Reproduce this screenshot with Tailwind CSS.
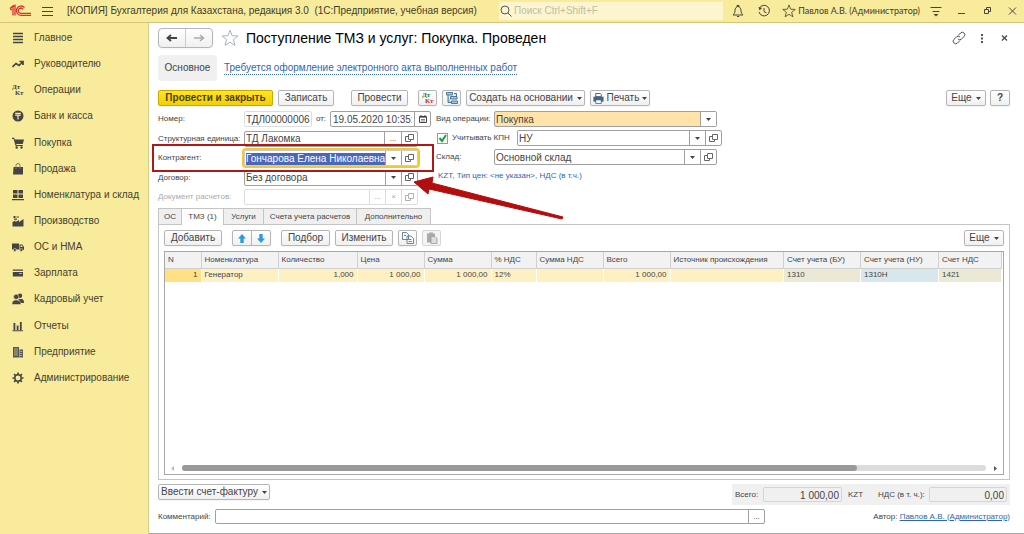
<!DOCTYPE html>
<html lang="ru">
<head>
<meta charset="utf-8">
<meta name="viewport" content="width=device-width, initial-scale=1">
<title>Поступление ТМЗ и услуг</title>
<script src="https://cdn.jsdelivr.net/npm/@tailwindcss/browser@4"></script>
</head>
<body class="min-h-screen flex flex-col bg-white font-['Liberation_Sans',Arial,sans-serif] text-[10px] leading-3 text-[#444]">

<svg class="hidden" aria-hidden="true">
  <symbol id="open" viewBox="0 0 9 9"><path d="M3.5.5h5v5h-5zM3.5 2.500h-3v5h5v-2" fill="none" stroke="#666"/></symbol>
  <symbol id="down" viewBox="0 0 5 3"><path d="M0 0h5L2.500 3z" fill="#444"/></symbol>
  <symbol id="star" viewBox="0 0 18 18"><path d="M9 1.200l2.100 5.500 5.900.3-4.600 3.700 1.600 5.700L9 13.200l-5 3.200 1.600-5.700L1 7l5.900-.3z" fill="none" stroke="currentColor" stroke-linejoin="round"/></symbol>
</svg>

<header class="flex h-[23px] shrink-0 items-center border-b border-[#d3c57c] bg-[#f9eb9c] pr-1 text-[#3f3b28]">
  <svg class="ml-2 h-4 w-6" viewBox="0 0 24 16" aria-label="1C" fill="none" stroke="#d5322d"><path d="M2 5.500L5 3v9.500M2.200 6.500H4M7 12.500V2.500L4.500 4" stroke-width="1.300"/><path d="M16.500 4.500A4.700 4.700 0 1 0 13 12.400h10M15 6.300A2.600 2.600 0 1 0 13 10.300h10" stroke-width="1.300"/></svg>
  <button class="ml-2 h-4 w-4" aria-label="Меню"><svg class="h-4 w-4" viewBox="0 0 16 16"><path d="M2 4.500h11M2 8.500h11M2 12.500h11" stroke="#444"/></svg></button>
  <h1 class="ml-[11px] whitespace-pre">[КОПИЯ] Бухгалтерия для Казахстана, редакция 3.0  (1С:Предприятие, учебная версия)</h1>
  <div class="ml-auto flex items-center">
    <label class="flex h-[18px] w-[224px] items-center bg-[#fdf5cf]">
      <svg class="ml-px h-3 w-3" viewBox="0 0 12 12" fill="none" stroke="#555"><circle cx="5" cy="5" r="4"/><path d="M8 8l3.500 3.500"/></svg>
      <input class="ml-0.5 min-w-0 flex-1 outline-none placeholder:text-[#c2bca0]" placeholder="Поиск Ctrl+Shift+F" aria-label="Поиск">
    </label>
    <button class="ml-[7px] h-4 w-4" aria-label="Уведомления"><svg viewBox="0 0 16 16" class="h-4 w-4" fill="none" stroke="#444"><path d="M3 12c1-1 2-2 2-4.500 0-2.500 1.500-4 3-4s3 1.500 3 4c0 2.500 1 3.500 2 4.500zM7 3.500V2.500h2v1M7 13.500h2.200"/></svg></button>
    <button class="ml-2.5 h-4 w-4" aria-label="История"><svg viewBox="0 0 16 16" class="h-4 w-4" fill="none" stroke="#444"><path d="M3.500 5A5.300 5.300 0 1 1 3 9M8 5v3.500l2.500 1.500"/><path d="M2.500 4l1 3.500L6 5z" fill="#444" stroke="none"/></svg></button>
    <button class="ml-2.5 h-3.5 w-3.5" aria-label="Избранное"><svg class="h-3.5 w-3.5"><use href="#star"/></svg></button>
    <button class="w-[124px] whitespace-nowrap text-right font-[Lato,sans-serif] text-[9px]">Павлов А.В. (Администратор)</button>
    <button class="ml-2 h-4 w-4" aria-label="Настройки"><svg viewBox="0 0 16 16" class="h-4 w-4"><path d="M2.500 4.500h11M4.500 8.500h7" stroke="#444"/><path d="M5.500 11h5L8 13.500z" fill="#444"/></svg></button>
    <button class="ml-2.5 h-4 w-4" aria-label="Свернуть"><svg viewBox="0 0 16 16" class="h-4 w-4"><path d="M4 10.500h7" stroke="#444"/></svg></button>
    <button class="ml-2.5 h-4 w-4" aria-label="Развернуть"><svg viewBox="0 0 16 16" class="h-4 w-4" fill="none" stroke="#444"><path d="M4.500 6.500h4v4h-4zM6.500 6V4.500h4v4H9"/></svg></button>
    <button class="ml-2 h-4 w-4" aria-label="Закрыть"><svg viewBox="0 0 16 16" class="h-4 w-4"><path d="M5 4.500l7 7M12 4.500l-7 7" stroke="#444"/></svg></button>
  </div>
</header>

<div class="flex flex-1">
  <nav class="w-[149px] shrink-0 border-r border-[#d9cd8c] bg-[#f9eb9c] pt-[7px]">
    <ul class="flex h-[356px] flex-col justify-between text-[#45412d]">
      <li><a href="#" class="flex h-4 items-center gap-2.5 pl-3"><svg class="h-3 w-3" viewBox="0 0 12 12"><path d="M1 1.500h10M1 4.500h10M1 7.500h10M1 10.500h10" stroke="#444" stroke-width="1.600"/></svg>Главное</a></li>
      <li><a href="#" class="flex h-4 items-center gap-2.5 pl-3"><svg class="h-3 w-3" viewBox="0 0 12 12"><path d="M.5 9l3.500-3.500 3 2L10.500 4M7.500 3.500H11V7" fill="none" stroke="#444" stroke-width="1.700"/></svg>Руководителю</a></li>
      <li><a href="#" class="flex h-4 items-center gap-2.5 pl-3"><svg class="h-3 w-3" viewBox="0 0 12 12" font-family="Liberation Serif,serif" font-size="7" font-weight="bold" fill="#444"><text x="0" y="5">Дт</text><text x="3" y="11">Кт</text></svg>Операции</a></li>
      <li><a href="#" class="flex h-4 items-center gap-2.5 pl-3"><svg class="h-3 w-3" viewBox="0 0 12 12"><circle cx="6" cy="6" r="5.500" fill="#444"/><path d="M3.200 3.300h5.600M3.200 5.200h5.600M6 5v4.500" stroke="#f9eb9c" stroke-width="1.200"/></svg>Банк и касса</a></li>
      <li><a href="#" class="flex h-4 items-center gap-2.5 pl-3"><svg class="h-3 w-3" viewBox="0 0 12 12"><path d="M0 .8h2.200l.6 1.700H12L10.800 7H4.200l.3 1h6.300v1H3.600L1.600 1.900H0z" fill="#444"/><circle cx="4.700" cy="10.500" r="1.200" fill="#444"/><circle cx="9.500" cy="10.500" r="1.200" fill="#444"/></svg>Покупка</a></li>
      <li><a href="#" class="flex h-4 items-center gap-2.5 pl-3"><svg class="h-3 w-3" viewBox="0 0 12 12"><path d="M1.500 4h9.500v7.500H1z" fill="#444"/><path d="M4 6V2.500a2 2 0 0 1 4 0V6" fill="none" stroke="#777" stroke-width="1"/></svg>Продажа</a></li>
      <li><a href="#" class="flex h-4 items-center gap-2.5 pl-3"><svg class="h-3 w-3" viewBox="0 0 12 12"><path d="M1 1h4.500v3.500H1zM6.500 1H11v3.500H6.500zM1 5.500h4.500V9H1zM6.500 5.500H11V9H6.500zM0 10h12v1.300H0z" fill="#444"/></svg>Номенклатура и склад</a></li>
      <li><a href="#" class="flex h-4 items-center gap-2.5 pl-3"><svg class="h-3 w-3" viewBox="0 0 12 12"><path d="M.5 11.500V7l3-1.500V7L7 5v2l4.500-3v7.500zM1.500 1h2v2h-2zM4.500 1.500H7v1H4.500zM2 3.500h3v1.200H2z" fill="#444"/></svg>Производство</a></li>
      <li><a href="#" class="flex h-4 items-center gap-2.5 pl-3"><svg class="h-3 w-3" viewBox="0 0 12 12"><path d="M0 2.500h7v6H0zM7.500 3.500h2.800L12 6v3H7.500z" fill="#444"/><path d="M8.500 4.500H10l.8 1.500H8.500z" fill="#f9eb9c"/><circle cx="2.800" cy="9" r="1.500" fill="#444" stroke="#f9eb9c" stroke-width=".6"/><circle cx="9.300" cy="9" r="1.500" fill="#444" stroke="#f9eb9c" stroke-width=".6"/></svg>ОС и НМА</a></li>
      <li><a href="#" class="flex h-4 items-center gap-2.5 pl-3"><svg class="h-3 w-3" viewBox="0 0 12 12"><path d="M.8 2.500H11v1.200H.8zM.8 5H11v4.500H.8z" fill="#444"/><path d="M7 6.500h3" stroke="#bbb27a"/></svg>Зарплата</a></li>
      <li><a href="#" class="flex h-4 items-center gap-2.5 pl-3"><svg class="h-3 w-3" viewBox="0 0 12 12" fill="#444"><circle cx="8" cy="2.800" r="2.200"/><path d="M6.500 6h3.500c1.500.5 2 2 2 4H8z"/><g stroke="#f9eb9c" stroke-width=".5"><circle cx="4.200" cy="3.800" r="2.600"/><path d="M0 11.500c0-3 1-4.500 4.200-4.500S9 8.500 9 11.500z"/></g></svg>Кадровый учет</a></li>
      <li><a href="#" class="flex h-4 items-center gap-2.5 pl-3"><svg class="h-3 w-3" viewBox="0 0 12 12"><path d="M1.500 3h1.800v7H1.500zM4.700 5.500h1.800V10H4.700zM7.900 2h1.800v8H7.900zM.5 10.300h10.500v.9H.5z" fill="#444"/></svg>Отчеты</a></li>
      <li><a href="#" class="flex h-4 items-center gap-2.5 pl-3"><svg class="h-3 w-3" viewBox="0 0 12 12"><path d="M1 1h6v10.500H1zM7.500 3.500H11v8H7.500z" fill="#555"/><path d="M2 3h4M2 5h4M2 7h4M2 9h4M8.200 5.500h2M8.200 7.500h2M8.200 9.500h2" stroke="#d5c888" stroke-width=".8"/></svg>Предприятие</a></li>
      <li><a href="#" class="flex h-4 items-center gap-2.5 pl-3"><svg class="h-3 w-3" viewBox="0 0 12 12" fill="none" stroke="#444"><circle cx="6" cy="6" r="3.200" stroke-width="1.500"/><path d="M6 .5v2M6 9.500v2M.5 6h2M9.500 6h2M2.100 2.100l1.400 1.400M8.500 8.500l1.400 1.400M9.900 2.100L8.500 3.500M3.500 8.500L2.100 9.900" stroke-width="1.700"/></svg>Администрирование</a></li>
    </ul>
  </nav>

  <main class="flex min-w-0 flex-1 flex-col border-b border-[#aaa] pl-[9px] pr-[14px] pt-[5px]">
    <div class="flex h-5 items-center">
      <div class="flex h-5 w-[55px] rounded-sm border border-[#b5b5b5] bg-linear-to-b from-white to-[#f0f0f0] shadow-xs">
        <button class="flex flex-1 items-center justify-center border-r border-[#ccc]" aria-label="Назад"><svg class="h-2 w-3" viewBox="0 0 12 8"><path d="M11 4H2M5 1L1.500 4 5 7" fill="none" stroke="#444" stroke-width="1.800"/></svg></button>
        <button class="flex flex-1 items-center justify-center" aria-label="Вперед"><svg class="h-2 w-3" viewBox="0 0 12 8"><path d="M1 4h9M7 1l3.500 3L7 7" fill="none" stroke="#aaa" stroke-width="1.500"/></svg></button>
      </div>
      <button class="ml-2 h-[18px] w-[18px] text-[#aab2b8]" aria-label="В избранное"><svg class="h-[18px] w-[18px]"><use href="#star"/></svg></button>
      <h2 class="ml-[7px] text-[14px] leading-4 text-black">Поступление ТМЗ и услуг: Покупка. Проведен</h2>
      <button class="ml-auto h-4 w-4" aria-label="Ссылка"><svg class="h-4 w-4" viewBox="0 0 16 16" fill="none" stroke="#555"><path d="M7 5.500l2.500-2.500a2.500 2.500 0 0 1 3.600 3.600L10.500 9a2.500 2.500 0 0 1-3.500 0M9 10.500L6.500 13a2.500 2.500 0 0 1-3.600-3.600L5.500 7A2.500 2.500 0 0 1 9 7"/></svg></button>
      <button class="ml-2 h-4 w-4" aria-label="Еще"><svg class="h-4 w-4" viewBox="0 0 16 16"><path d="M6 4h2v2H6zM6 7.500h2v2H6zM6 11h2v2H6z" fill="#555"/></svg></button>
      <button class="ml-2 h-3 w-[11px]" aria-label="Закрыть"><svg class="h-3 w-[11px]" viewBox="3 2 11 12"><path d="M6 5.500l5 5M11 5.500l-5 5" stroke="#444" stroke-width="1.200"/></svg></button>
    </div>

    <div class="mt-[7px] flex h-[26px] items-center gap-[7px]">
      <button class="h-[26px] w-[59px] rounded-sm bg-[#f0f0f0]">Основное</button>
      <a href="#" class="border-b border-dotted border-[#3a6ea5] text-[#3465a4]">Требуется оформление электронного акта выполненных работ</a>
    </div>

    <div class="mt-[9px] flex h-4 items-center">
      <button class="h-4 w-[115px] rounded-xs border border-[#c9a800] bg-linear-to-b from-[#ffe51f] to-[#f3cf00] font-bold leading-none text-[#4a4010] shadow-xs">Провести и закрыть</button>
      <button class="ml-[5px] h-4 w-[56px] rounded-xs border border-[#b5b5b5] bg-linear-to-b from-white to-[#f0f0f0] leading-none shadow-xs">Записать</button>
      <button class="ml-[17px] h-4 w-[57px] rounded-xs border border-[#b5b5b5] bg-linear-to-b from-white to-[#f0f0f0] leading-none shadow-xs">Провести</button>
      <button class="ml-[10px] flex h-4 w-[19px] items-center justify-center rounded-xs border border-[#b5b5b5] bg-linear-to-b from-white to-[#f0f0f0] shadow-xs" aria-label="Движения"><svg class="h-3 w-3" viewBox="0 0 12 12" font-family="Liberation Serif,serif" font-size="7" font-weight="bold"><text x="0" y="5" fill="#18803a">Дт</text><text x="3" y="11" fill="#d02a20">Кт</text></svg></button>
      <button class="ml-[5px] flex h-4 w-[19px] items-center justify-center rounded-xs border border-[#b5b5b5] bg-linear-to-b from-white to-[#f0f0f0] shadow-xs" aria-label="Структура"><svg class="h-3 w-3" viewBox="0 0 12 12" fill="#a9c9de" stroke="#3c6e91"><path d="M.5.500h6v2.500h-6zM4.500 4.500h6.500v2.500h-6.500zM5.500 9h6v2.500h-6zM2 3v7.500h3M8 1.500h2.500v2.500" stroke-width=".9"/></svg></button>
      <button class="ml-[5px] flex h-4 w-[119px] items-center justify-center gap-1 rounded-xs border border-[#b5b5b5] bg-linear-to-b from-white to-[#f0f0f0] leading-none shadow-xs">Создать на основании<svg class="h-[3px] w-[5px]"><use href="#down"/></svg></button>
      <button class="ml-[5px] flex h-4 w-[60px] items-center justify-center gap-[3px] rounded-xs border border-[#b5b5b5] bg-linear-to-b from-white to-[#f0f0f0] leading-none shadow-xs"><svg class="h-[11px] w-[11px] shrink-0" viewBox="0 0 12 12"><path d="M3 .5h5l1 1V4H3z" fill="#fff" stroke="#456"/><path d="M.5 4h11v5.500H.5z" fill="#3d6787"/><path d="M3 7.500h6v4H3z" fill="#fff" stroke="#456" stroke-width=".8"/></svg>Печать<svg class="h-[3px] w-[5px] shrink-0"><use href="#down"/></svg></button>
      <button class="ml-auto flex h-4 w-10 items-center justify-center gap-1 rounded-xs border border-[#b5b5b5] bg-linear-to-b from-white to-[#f0f0f0] leading-none shadow-xs">Еще<svg class="h-[3px] w-[5px]"><use href="#down"/></svg></button>
      <button class="ml-1 h-4 w-5 rounded-xs border border-[#b5b5b5] bg-linear-to-b from-white to-[#f0f0f0] font-bold leading-none shadow-xs">?</button>
    </div>

    <form class="mt-[5px] flex h-[94px] whitespace-nowrap text-[8px] [&_input]:pt-px [&_input]:text-[10px]">
      <div class="relative flex w-[273px] flex-col justify-between">
        <div class="flex h-4 items-center">
          <label for="num" class="w-[86px]">Номер:</label>
          <input id="num" value="ТДЛ00000006" class="h-4 w-[68px] rounded-xs border border-[#ddd] px-px">
          <label for="date" class="w-[18px] text-center">от:</label>
          <div class="flex h-4 w-[101px] shrink-0 rounded-xs border border-[#a0a0a0]">
            <input id="date" value="19.05.2020 10:35:51" class="min-w-0 flex-1 px-0.5">
            <button type="button" class="flex w-4 items-center justify-center border-l border-[#a0a0a0]" aria-label="Календарь"><svg class="h-2 w-2" viewBox="0 0 8 8"><path d="M.5 1.500h7v6h-7zM2 0v2M6 0v2" fill="none" stroke="#444"/><path d="M.5 2.500h7M2 4.500h4M2 6h4" stroke="#666" stroke-width=".8"/></svg></button>
          </div>
        </div>
        <div class="flex h-4 items-center">
          <label for="unit" class="w-[86px]">Структурная единица:</label>
          <div class="flex h-4 w-[174px] rounded-xs border border-[#a0a0a0]">
            <input id="unit" value="ТД Лакомка" class="min-w-0 flex-1 px-px">
            <button type="button" class="w-[17px] border-l border-[#a0a0a0] leading-none" aria-label="Выбрать">...</button>
            <button type="button" class="flex w-4 items-center justify-center border-l border-[#a0a0a0]" aria-label="Открыть"><svg class="h-[9px] w-[9px]"><use href="#open"/></svg></button>
          </div>
        </div>
        <div class="flex h-4 items-center">
          <label for="agent" class="w-[86px]">Контрагент:</label>
          <div class="flex h-4 w-[174px] rounded-xs border border-[#ccc] outline-2 outline-[#f2c830]">
            <input id="agent" value="Гончарова Елена Николаевна" class="min-w-0 flex-1 pl-px outline-none selection:bg-[#4a67bd] selection:text-white">
            <button type="button" class="flex w-4 items-center justify-center border-l border-[#a0a0a0]" aria-label="Список"><svg class="h-[3px] w-[5px]"><use href="#down"/></svg></button>
            <button type="button" class="flex w-4 items-center justify-center border-l border-[#a0a0a0]" aria-label="Открыть"><svg class="h-[9px] w-[9px]"><use href="#open"/></svg></button>
          </div>
        </div>
        <div class="flex h-4 items-center">
          <label for="contract" class="w-[86px]">Договор:</label>
          <div class="flex h-4 w-[174px] rounded-xs border border-[#a0a0a0]">
            <input id="contract" value="Без договора" class="min-w-0 flex-1 px-px">
            <button type="button" class="flex w-4 items-center justify-center border-l border-[#a0a0a0]" aria-label="Список"><svg class="h-[3px] w-[5px]"><use href="#down"/></svg></button>
            <button type="button" class="flex w-4 items-center justify-center border-l border-[#a0a0a0]" aria-label="Открыть"><svg class="h-[9px] w-[9px]"><use href="#open"/></svg></button>
          </div>
        </div>
        <div class="flex h-4 items-center text-[#aaa]">
          <label for="doc" class="w-[86px]">Документ расчетов:</label>
          <div class="flex h-4 w-[174px] rounded-xs border border-[#ddd]">
            <input id="doc" disabled class="min-w-0 flex-1 px-px">
            <button type="button" disabled class="w-4 border-l border-[#ddd] leading-none" aria-label="Выбрать">...</button>
            <button type="button" disabled class="w-4 border-l border-[#ddd] leading-none" aria-label="Очистить">×</button>
            <button type="button" disabled class="flex w-4 items-center justify-center border-l border-[#ddd]" aria-label="Открыть"><svg class="h-[9px] w-[9px] opacity-50"><use href="#open"/></svg></button>
          </div>
        </div>
        <div class="pointer-events-none absolute -left-[6px] top-[33px] h-[28px] w-[282px] border-2 border-[#b01818]"></div>
        <svg class="pointer-events-none absolute left-[256px] top-[65px] h-[44px] w-[152px]" viewBox="0 0 152 44"><path d="M0 6L19 1 18 7 149 41 148 43 15 13 14 18z" fill="#b30d0d" stroke="#b30d0d" stroke-linejoin="round"/></svg>
      </div>

      <div class="ml-[5px] flex flex-col gap-[3px]">
        <div class="flex h-4 items-center">
          <label for="op" class="w-[58px]">Вид операции:</label>
          <div class="relative h-4 w-[223px]">
            <select id="op" class="h-4 w-full appearance-none rounded-xs border border-[#a0a0a0] bg-[#ffe3a8] px-px pt-px text-[10px] leading-none"><option>Покупка</option></select>
            <span class="pointer-events-none absolute inset-y-px right-px flex w-4 items-center justify-center border-l border-[#a0a0a0] bg-white"><svg class="h-[3px] w-[5px]"><use href="#down"/></svg></span>
          </div>
        </div>
        <div class="flex h-4 items-center">
          <label class="grid w-[81px] grid-cols-[12px_1fr] items-center gap-x-1">
            <input type="checkbox" checked class="col-start-1 row-start-1 ml-px h-[11px] w-[11px] appearance-none border border-[#999] bg-white">
            <svg class="pointer-events-none z-10 col-start-1 row-start-1 ml-px h-[11px] w-[11px]" viewBox="0 0 11 11"><path d="M2.500 5l2.500 3 4-6" fill="none" stroke="#18a03c" stroke-width="2"/></svg>
            <span class="col-start-2 row-start-1">Учитывать КПН</span>
          </label>
          <div class="flex h-4 w-[205px] rounded-xs border border-[#a0a0a0]">
            <input value="НУ" aria-label="Вид учета" class="min-w-0 flex-1 px-px">
            <button type="button" class="flex w-4 items-center justify-center border-l border-[#a0a0a0]" aria-label="Список"><svg class="h-[3px] w-[5px]"><use href="#down"/></svg></button>
            <button type="button" class="flex w-4 items-center justify-center border-l border-[#a0a0a0]" aria-label="Открыть"><svg class="h-[9px] w-[9px]"><use href="#open"/></svg></button>
          </div>
        </div>
        <div class="flex h-4 items-center">
          <label for="store" class="w-[58px]">Склад:</label>
          <div class="flex h-4 w-[223px] rounded-xs border border-[#a0a0a0]">
            <input id="store" value="Основной склад" class="min-w-0 flex-1 px-px">
            <button type="button" class="flex w-4 items-center justify-center border-l border-[#a0a0a0]" aria-label="Список"><svg class="h-[3px] w-[5px]"><use href="#down"/></svg></button>
            <button type="button" class="flex w-4 items-center justify-center border-l border-[#a0a0a0]" aria-label="Открыть"><svg class="h-[9px] w-[9px]"><use href="#open"/></svg></button>
          </div>
        </div>
        <a href="#" class="ml-0.5 flex h-4 items-center text-[#2f68a8]">KZT, Тип цен: &lt;не указан&gt;, НДС (в т.ч.)</a>
      </div>
    </form>

    <div class="mt-[3px] flex h-4 text-[8px]" role="tablist">
      <button role="tab" class="w-6 border border-b-0 border-[#c4c4c4] bg-[#efefef]">ОС</button>
      <button role="tab" aria-selected="true" class="z-10 -mb-px w-[42px] border-r border-t border-[#c4c4c4] bg-white pb-px">ТМЗ (1)</button>
      <button role="tab" class="w-10 border-r border-t border-[#c4c4c4] bg-[#efefef]">Услуги</button>
      <button role="tab" class="w-[93px] whitespace-nowrap border-r border-t border-[#c4c4c4] bg-[#efefef]">Счета учета расчетов</button>
      <button role="tab" class="w-[74px] border-r border-t border-[#c4c4c4] bg-[#efefef]">Дополнительно</button>
    </div>

    <section class="flex flex-1 flex-col border border-[#c4c4c4] px-[5px] pb-1 pt-[5px]">
      <div class="flex h-4 items-center">
        <button class="h-4 w-[58px] rounded-xs border border-[#b5b5b5] bg-linear-to-b from-white to-[#f0f0f0] leading-none shadow-xs">Добавить</button>
        <div class="ml-[10px] flex h-4 w-[39px] rounded-xs border border-[#b5b5b5] bg-linear-to-b from-white to-[#f0f0f0] shadow-xs">
          <button class="flex flex-1 items-center justify-center border-r border-[#b5b5b5]" aria-label="Вверх"><svg class="h-[9px] w-2" viewBox="0 0 8 9"><path d="M4 0l4 4.500H5.700V9H2.300V4.500H0z" fill="#2b9be0"/></svg></button>
          <button class="flex flex-1 items-center justify-center" aria-label="Вниз"><svg class="h-[9px] w-2" viewBox="0 0 8 9"><path d="M4 9l4-4.500H5.700V0H2.300v4.500H0z" fill="#2b9be0"/></svg></button>
        </div>
        <button class="ml-[10px] h-4 w-[49px] rounded-xs border border-[#b5b5b5] bg-linear-to-b from-white to-[#f0f0f0] leading-none shadow-xs">Подбор</button>
        <button class="ml-[5px] h-4 w-[58px] rounded-xs border border-[#b5b5b5] bg-linear-to-b from-white to-[#f0f0f0] leading-none shadow-xs">Изменить</button>
        <button class="ml-[5px] flex h-4 w-[19px] items-center justify-center rounded-xs border border-[#b5b5b5] bg-linear-to-b from-white to-[#f0f0f0] shadow-xs" aria-label="Копировать"><svg class="h-3 w-3" viewBox="0 0 12 12" fill="#fff" stroke="#5a7a90" stroke-width=".9"><path d="M.5.500h4l2 2v5h-6zM5 4h4l2.500 2.500v5H5zM6.500 7.500h3M6.500 9.500h3.500M2 3.500h2"/></svg></button>
        <button class="ml-[5px] flex h-4 w-[19px] items-center justify-center rounded-xs border border-[#d5d5d5] bg-[#f4f4f4]" aria-label="Вставить"><svg class="h-3 w-3" viewBox="0 0 12 12"><path d="M1 1.500h8v9H1zM3 .5h4v2H3z" fill="#aaa"/><path d="M5 4.500h4l2 2v5H5z" fill="#ddd" stroke="#999" stroke-width=".8"/></svg></button>
        <button class="ml-auto flex h-4 w-10 items-center justify-center gap-1 rounded-xs border border-[#b5b5b5] bg-linear-to-b from-white to-[#f0f0f0] leading-none shadow-xs">Еще<svg class="h-[3px] w-[5px]"><use href="#down"/></svg></button>
      </div>

      <div class="mt-[5px] flex flex-1 flex-col border border-[#a8a8a8] pr-px">
        <table class="w-full table-fixed text-left text-[8px]">
          <colgroup><col class="w-[36px]"><col class="w-[77px]"><col class="w-[79px]"><col class="w-[67px]"><col class="w-[67px]"><col class="w-[45px]"><col class="w-[67px]"><col class="w-[67px]"><col><col class="w-[77px]"><col class="w-[78px]"><col class="w-[63px]"></colgroup>
          <thead><tr class="h-4 border-b border-[#d0d0d0] bg-[#f2f2f2] whitespace-nowrap *:border-r *:border-[#d0d0d0] *:px-[3px] *:py-0 *:font-normal">
            <th>N</th><th>Номенклатура</th><th>Количество</th><th>Цена</th><th>Сумма</th><th>% НДС</th><th>Сумма НДС</th><th>Всего</th><th>Источник происхождения</th><th>Счет учета (БУ)</th><th>Счет учета (НУ)</th><th>Счет НДС</th>
          </tr></thead>
          <tbody><tr class="h-[14px] bg-[#fff0c4] whitespace-nowrap *:border-r *:border-white *:px-[3px] *:py-0">
            <td class="bg-[#ffe083] text-right">1</td><td>Генератор</td><td class="text-right">1,000</td><td class="text-right">1 000,00</td><td class="text-right">1 000,00</td><td>12%</td><td></td><td class="text-right">1 000,00</td><td></td><td class="bg-[#ebe9d5]">1310</td><td class="bg-[#d7e7ec]">1310Н</td><td class="bg-[#ebe9d5]">1421</td>
          </tr></tbody>
        </table>
        <div class="mt-auto mb-[3px] flex h-[6px] items-center gap-2 pl-[6px] pr-[5px]">
          <svg class="h-[5px] w-[3px]" viewBox="0 0 3 5"><path d="M3 0v5L0 2.500z" fill="#bbb"/></svg>
          <div class="h-[6px] flex-1 rounded-full bg-[#dcdcdc]"><div class="h-[6px] w-[84%] rounded-full bg-[#999]"></div></div>
          <svg class="h-[5px] w-[3px]" viewBox="0 0 3 5"><path d="M0 0v5l3-2.500z" fill="#555"/></svg>
        </div>
      </div>
    </section>

    <div class="mt-1 flex h-[21px] items-start">
      <button class="flex h-4 w-[112px] items-center justify-center gap-1 rounded-xs border border-[#b5b5b5] bg-linear-to-b from-white to-[#f0f0f0] leading-none shadow-xs">Ввести счет-фактуру<svg class="h-[3px] w-[5px]"><use href="#down"/></svg></button>
      <div class="ml-auto flex h-[21px] items-center bg-[#f0f0f0] px-[3px] text-[8px]">
        <label for="total" class="w-7">Всего:</label>
        <input id="total" readonly value="1 000,00" class="h-[15px] w-[79px] rounded-xs border border-[#d5d5d5] px-0.5 pt-px text-right text-[10px]">
        <span class="ml-1.5 w-[30px]">KZT</span>
        <label for="vat" class="w-[51px] whitespace-nowrap">НДС (в т. ч.):</label>
        <input id="vat" readonly value="0,00" class="h-[15px] w-[78px] rounded-xs border border-[#d5d5d5] px-0.5 pt-px text-right text-[10px]">
      </div>
    </div>
    <div class="mb-[9px] mt-1 flex h-[15px] items-center text-[8px]">
      <label for="comment" class="w-[57px]">Комментарий:</label>
      <div class="flex h-[15px] w-[550px] rounded-xs border border-[#a0a0a0]">
        <input id="comment" class="min-w-0 flex-1 px-0.5 text-[10px]">
        <button class="w-4 border-l border-[#a0a0a0] leading-none" aria-label="Выбрать">...</button>
      </div>
      <p class="ml-auto">Автор: <a href="#" class="text-[#2f68a8] underline">Павлов А.В. (Администратор)</a></p>
    </div>
  </main>
</div>
<script>
  const agent = document.getElementById('agent');
  agent.focus();
  agent.select();
</script>
</body>
</html>
